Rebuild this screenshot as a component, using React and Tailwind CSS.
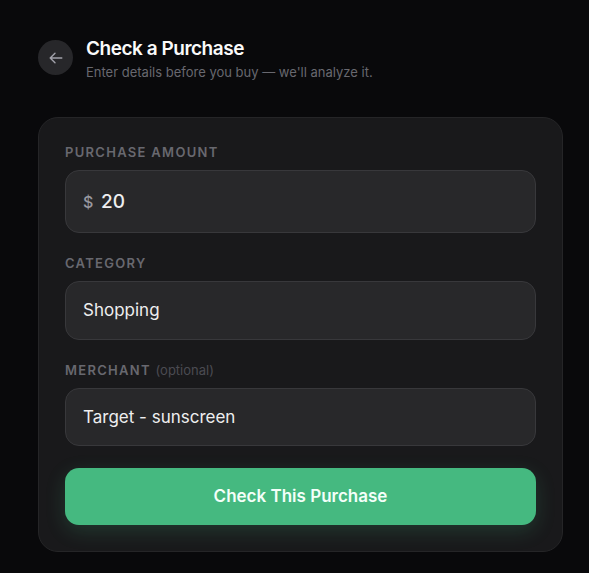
import { useState } from 'react';

const labelClass = 'block text-[13px] leading-4 font-semibold uppercase tracking-widest text-[#68686f]';
const fieldClass = 'w-full appearance-none rounded-[14px] border border-[#38383b] bg-[#28282a] text-[#eeeeef] outline-none focus:border-[#45b980]';

export default function App() {
    const [amount, setAmount] = useState('20');
    const [category, setCategory] = useState('Shopping');
    const [merchant, setMerchant] = useState('Target - sunscreen');

    return (
        <main className="min-h-screen bg-[#09090b] pt-10 pr-[26px] pb-5 pl-[38px] font-['Inter',sans-serif]">
            {/* Header */}
            <header className="flex items-start gap-[13px]">
                <button
                    type="button"
                    aria-label="Go back"
                    className="flex size-[35px] shrink-0 items-center justify-center rounded-full bg-[#27272a] text-[#a1a1aa]"
                >
                    <svg
                        viewBox="0 0 14 14"
                        className="size-[14px]"
                        fill="none"
                        stroke="currentColor"
                        strokeWidth="1.4"
                        strokeLinecap="round"
                        strokeLinejoin="round"
                        aria-hidden="true"
                    >
                        <path d="M12.8 7H1.2M6 2.2L1.2 7 6 11.8" />
                    </svg>
                </button>
                <div>
                    <h1 className="text-[19px] leading-[18px] font-semibold tracking-tight text-[#fafafa]">Check a Purchase</h1>
                    <p className="mt-1 text-[13px] leading-5 text-[#68686f]">Enter details before you buy — we'll analyze it.</p>
                </div>
            </header>

            {/* Form */}
            <form
                className="mt-[35px] rounded-[20px] border border-[#252527] bg-[#19191b] p-[26px]"
                onSubmit={(e) => e.preventDefault()}
            >
                <label htmlFor="amount" className={labelClass}>Purchase Amount</label>
                <div className="relative mt-[10px]">
                    <span className="pointer-events-none absolute top-1/2 left-[18px] -translate-y-1/2 text-base font-medium text-[#9999a1]">$</span>
                    <input
                        id="amount"
                        inputMode="decimal"
                        value={amount}
                        onChange={(e) => setAmount(e.target.value)}
                        className={`${fieldClass} h-[63px] pr-4 pl-[35px] text-[19px] font-medium`}
                    />
                </div>

                <label htmlFor="category" className={`${labelClass} mt-[22px]`}>Category</label>
                <select
                    id="category"
                    value={category}
                    onChange={(e) => setCategory(e.target.value)}
                    className={`${fieldClass} mt-[10px] block h-[59px] px-[17px] text-[17px]`}
                >
                    <option>Shopping</option>
                </select>

                <label htmlFor="merchant" className={`${labelClass} mt-[22px]`}>
                    Merchant <span className="font-normal tracking-normal normal-case text-[#4b4b52]">(optional)</span>
                </label>
                <input
                    id="merchant"
                    value={merchant}
                    onChange={(e) => setMerchant(e.target.value)}
                    className={`${fieldClass} mt-[10px] block h-[58px] px-[17px] text-[17px]`}
                />

                <button
                    type="submit"
                    className="mt-[22px] block h-[57px] w-full rounded-[14px] bg-[#45b980] text-[17px] font-semibold text-[#f3fff9] shadow-[0_6px_20px] shadow-[#45b980]/20"
                >
                    Check This Purchase
                </button>
            </form>
        </main>
    );
}
